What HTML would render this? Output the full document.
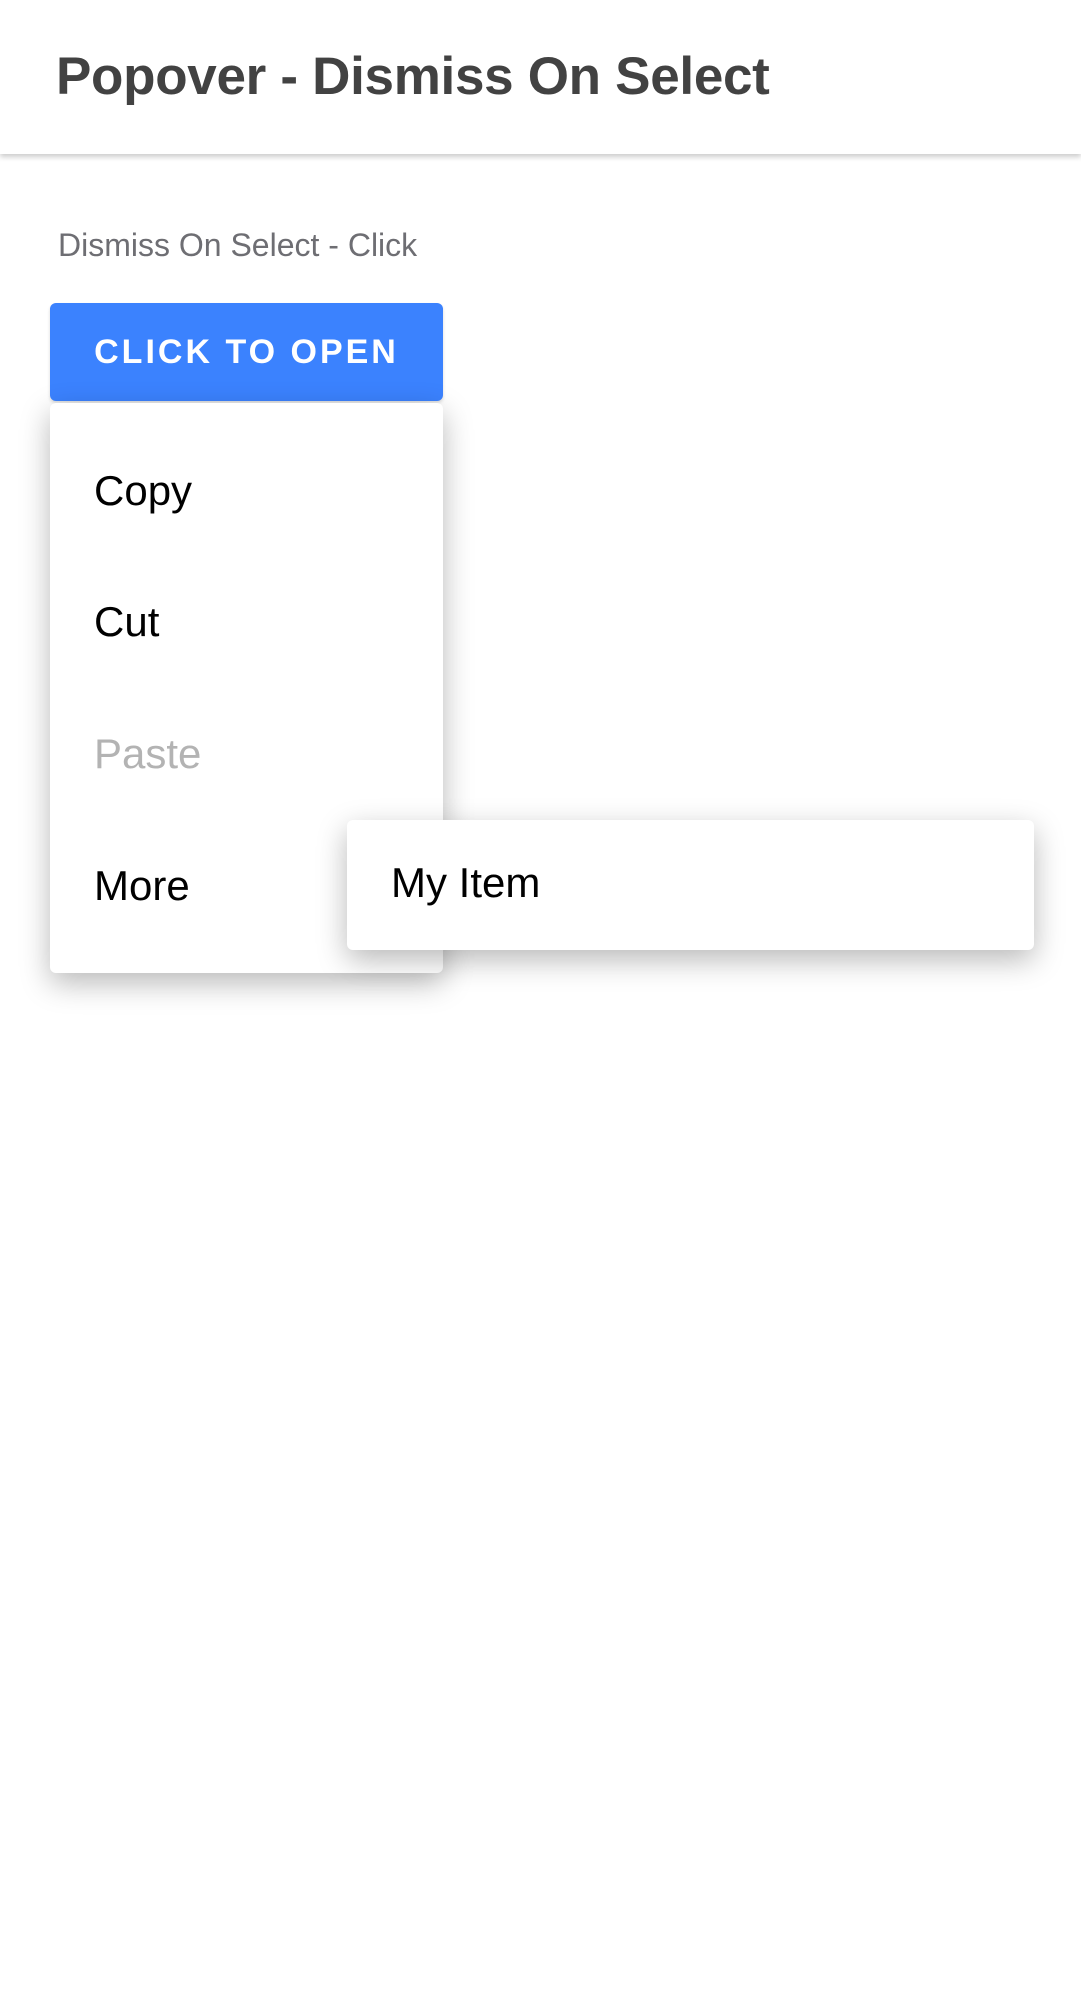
<!DOCTYPE html>
<html><head><meta charset="utf-8"><style>
html,body{margin:0;padding:0;background:#fff;width:1081px;height:1999px;overflow:hidden;font-family:"Liberation Sans",sans-serif;position:relative}
.hdr{position:absolute;left:0;top:0;width:1081px;height:154px;background:#fff;box-shadow:0 3px 5px rgba(0,0,0,0.2);}
.title{position:absolute;left:56px;top:46px;font-size:53px;color:#424242;font-weight:bold;letter-spacing:-0.3px;white-space:nowrap}
.sub{position:absolute;left:58px;top:227px;font-size:32px;color:#6e6e73;white-space:nowrap}
.btn{position:absolute;left:50px;top:303px;width:393px;height:98px;background:#3b82fe;border-radius:6px;color:#fff;font-size:34px;font-weight:bold;letter-spacing:3px;text-align:center;line-height:98px;box-shadow:0 2px 3px rgba(0,0,0,0.15)}
.menu{position:absolute;left:50px;top:403px;width:393px;height:570px;background:#fff;border-radius:6px;box-shadow:0 10px 30px rgba(0,0,0,0.28)}
.it{position:absolute;left:44px;font-size:42px;color:#000;line-height:50px}
.sm{position:absolute;left:347px;top:820px;width:687px;height:130px;background:#fff;border-radius:6px;box-shadow:0 10px 30px rgba(0,0,0,0.28)}
</style></head><body>
<div class="hdr"><div class="title">Popover - Dismiss On Select</div></div>
<div class="sub">Dismiss On Select - Click</div>
<div class="btn">CLICK TO OPEN</div>
<div class="menu">
<div class="it" style="top:63px">Copy</div>
<div class="it" style="top:194px">Cut</div>
<div class="it" style="top:326px;color:#b3b3b3">Paste</div>
<div class="it" style="top:458px">More</div>
</div>
<div class="sm"><div class="it" style="top:38px">My Item</div></div>
</body></html>
